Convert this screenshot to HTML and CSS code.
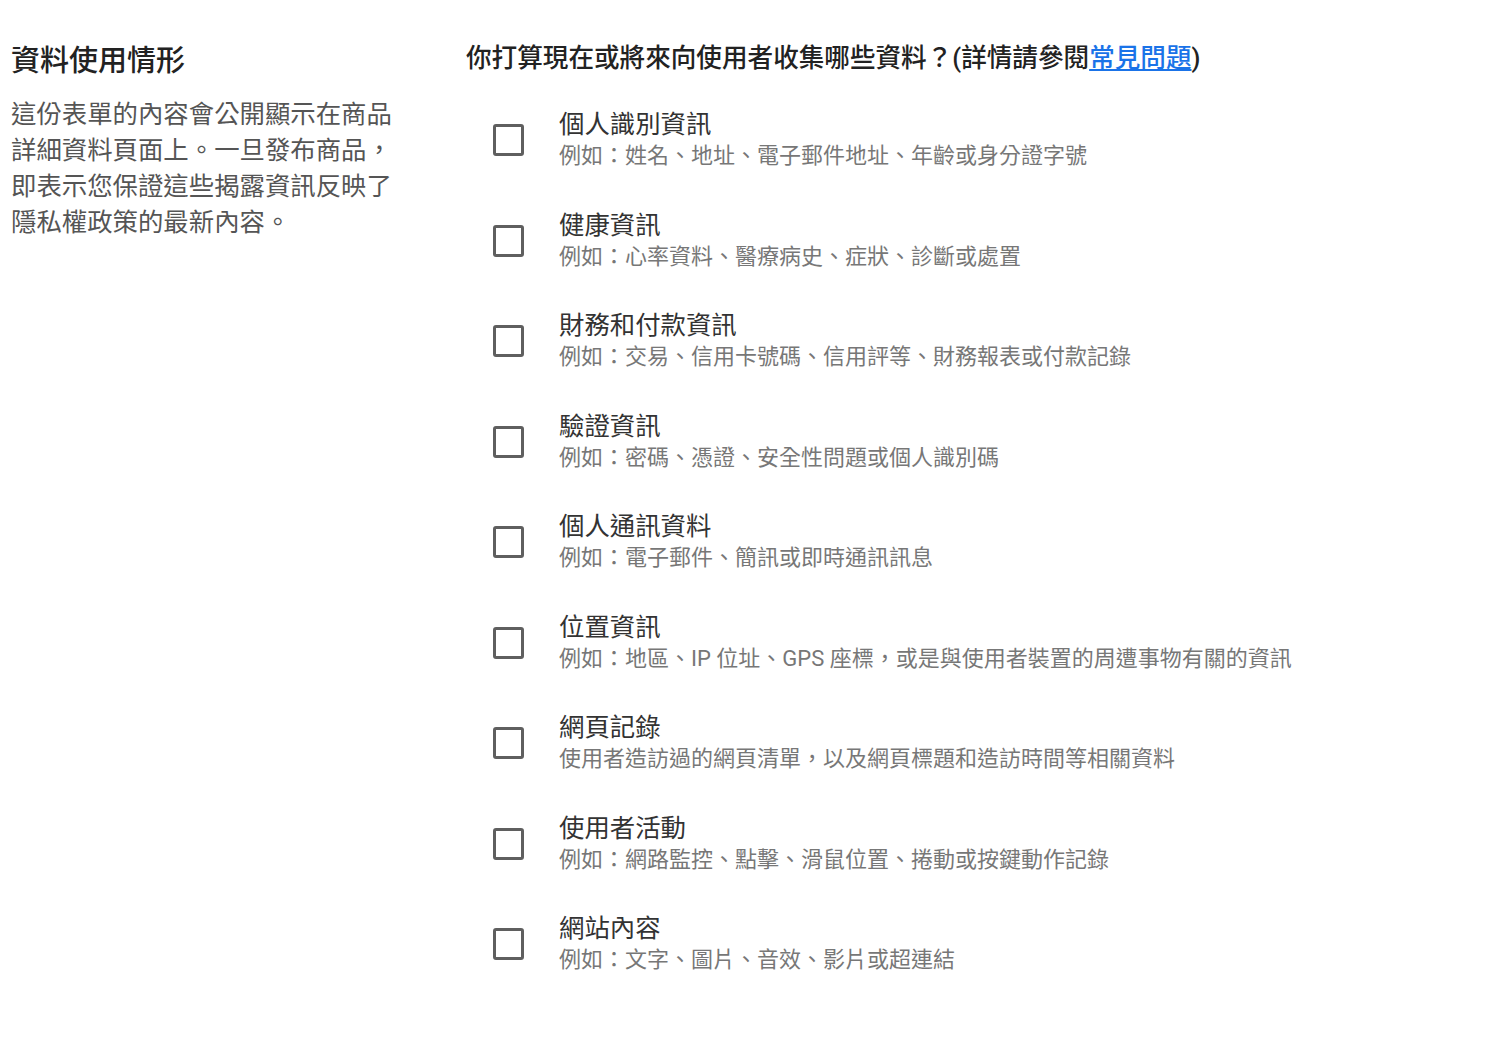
FILE: index.html
```html
<!DOCTYPE html>
<html lang="zh-Hant">
<head>
<meta charset="utf-8">
<link rel="stylesheet" href="styles.css">
</head>
<body>
<div class="page">
  <section class="intro">
    <h2 class="intro-title">資料使用情形</h2>
    <p class="intro-text">這份表單的內容會公開顯示在商品詳細資料頁面上。一旦發布商品，即表示您保證這些揭露資訊反映了隱私權政策的最新內容。</p>
  </section>
  <section class="form">
    <h3 class="question">你打算現在或將來向使用者收集哪些資料？(詳情請參閱<a class="link" href="#">常見問題</a>)</h3>
    <ul class="options">
      <li class="option"><span class="box"></span><div class="text"><div class="title">個人識別資訊</div><div class="desc">例如：姓名、地址、電子郵件地址、年齡或身分證字號</div></div></li>
      <li class="option"><span class="box"></span><div class="text"><div class="title">健康資訊</div><div class="desc">例如：心率資料、醫療病史、症狀、診斷或處置</div></div></li>
      <li class="option"><span class="box"></span><div class="text"><div class="title">財務和付款資訊</div><div class="desc">例如：交易、信用卡號碼、信用評等、財務報表或付款記錄</div></div></li>
      <li class="option"><span class="box"></span><div class="text"><div class="title">驗證資訊</div><div class="desc">例如：密碼、憑證、安全性問題或個人識別碼</div></div></li>
      <li class="option"><span class="box"></span><div class="text"><div class="title">個人通訊資料</div><div class="desc">例如：電子郵件、簡訊或即時通訊訊息</div></div></li>
      <li class="option"><span class="box"></span><div class="text"><div class="title">位置資訊</div><div class="desc">例如：地區、IP 位址、GPS 座標，或是與使用者裝置的周遭事物有關的資訊</div></div></li>
      <li class="option"><span class="box"></span><div class="text"><div class="title">網頁記錄</div><div class="desc">使用者造訪過的網頁清單，以及網頁標題和造訪時間等相關資料</div></div></li>
      <li class="option"><span class="box"></span><div class="text"><div class="title">使用者活動</div><div class="desc">例如：網路監控、點擊、滑鼠位置、捲動或按鍵動作記錄</div></div></li>
      <li class="option"><span class="box"></span><div class="text"><div class="title">網站內容</div><div class="desc">例如：文字、圖片、音效、影片或超連結</div></div></li>
    </ul>
  </section>
</div>
</body>
</html>
```
FILE: styles.css
```css
* { box-sizing: border-box; }
html, body { margin: 0; padding: 0; background: #fff; }
body {
  font-family: Roboto, "Noto Sans CJK TC", "Noto Sans", sans-serif;
  color: #333;
}
.page {
  display: flex;
  padding-left: 11px;
}
.intro {
  width: 455px;
  flex: none;
  padding-top: 43px;
}
.intro-title {
  margin: 0;
  font-size: 29px;
  line-height: 36px;
  font-weight: 500;
  color: #222;
}
.intro-text {
  margin: 17px 0 0;
  width: 395px;
  font-size: 25.4px;
  line-height: 36px;
  color: #555;
}
.form {
  padding-top: 40px;
}
.question {
  margin: 0;
  font-size: 25.6px;
  line-height: 36px;
  font-weight: 500;
  color: #222;
}
.link {
  color: #1a73e8;
  text-decoration: underline;
}
.options {
  list-style: none;
  margin: 14px 0 0;
  padding: 0;
}
.option {
  display: flex;
  align-items: center;
  height: 100.5px;
  padding-left: 27px;
}
.box {
  flex: none;
  width: 31px;
  height: 32px;
  border: 3px solid #5f5f5f;
  border-radius: 3px;
  margin-right: 35px;
}
.title {
  font-size: 25.4px;
  line-height: 32px;
  color: #333;
}
.desc {
  font-size: 22px;
  line-height: 32px;
  color: #777;
}
```
